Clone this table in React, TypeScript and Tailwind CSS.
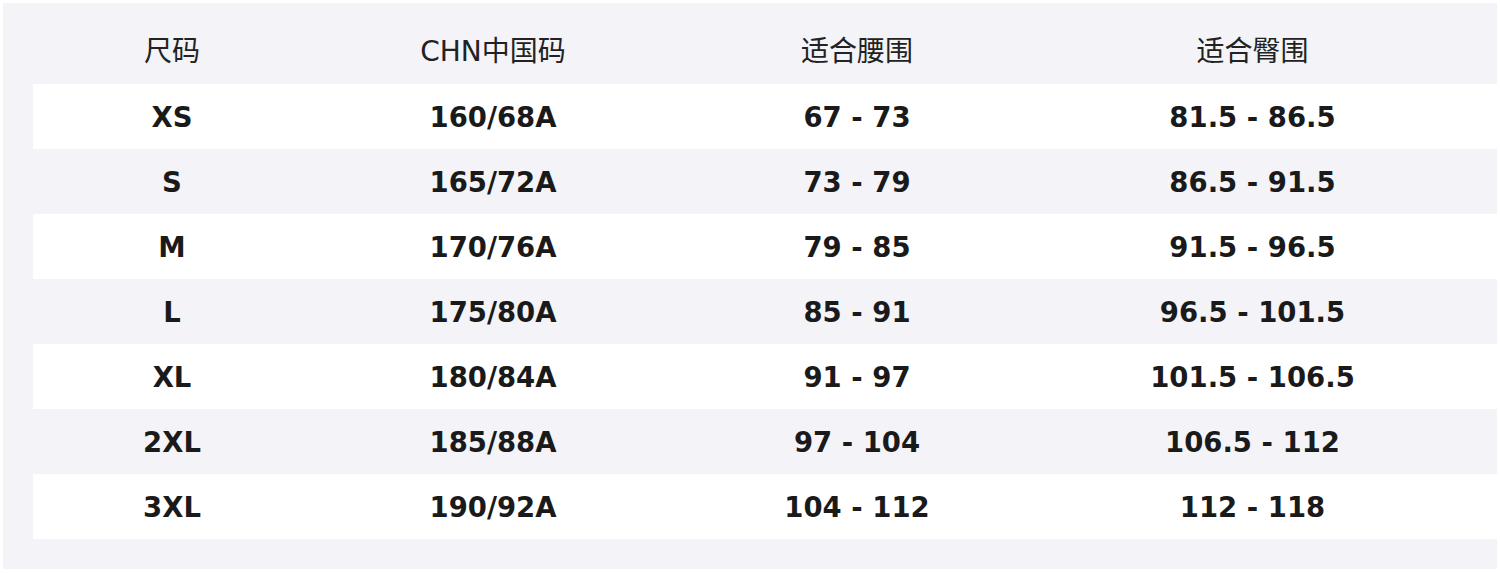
import React from "react";

const rows = [
  ["XS", "160/68A", "67 - 73", "81.5 - 86.5"],
  ["S", "165/72A", "73 - 79", "86.5 - 91.5"],
  ["M", "170/76A", "79 - 85", "91.5 - 96.5"],
  ["L", "175/80A", "85 - 91", "96.5 - 101.5"],
  ["XL", "180/84A", "91 - 97", "101.5 - 106.5"],
  ["2XL", "185/88A", "97 - 104", "106.5 - 112"],
  ["3XL", "190/92A", "104 - 112", "112 - 118"],
];

const headers = ["尺码", "CHN中国码", "适合腰围", "适合臀围"];

export default function App() {
  return (
    <div
      className="w-[1500px] h-[573px] bg-white pt-[3px] pl-[3px]"
      style={{ fontFamily: '"DejaVu Sans", "Noto Sans CJK SC", sans-serif' }}
    >
      <div className="w-[1494px] h-[566px] bg-[#f3f3f8] pt-[16px] pl-[30px]">
        <div className="grid grid-cols-[278px_364px_364px_427px] h-[65px] items-center text-[28px] text-[#222]">
          {headers.map((h) => (
            <div key={h} className="text-center">
              {h}
            </div>
          ))}
        </div>
        {rows.map((r, i) => (
          <div
            key={r[0]}
            className={
              "grid grid-cols-[278px_364px_364px_427px] h-[65px] items-center text-[27.5px] font-bold text-[#1a1a1a] pt-[2px] " +
              (i % 2 === 0 ? "bg-white" : "bg-[#f3f3f8]")
            }
          >
            {r.map((c, j) => (
              <div key={j} className="text-center">
                {c}
              </div>
            ))}
          </div>
        ))}
      </div>
    </div>
  );
}
